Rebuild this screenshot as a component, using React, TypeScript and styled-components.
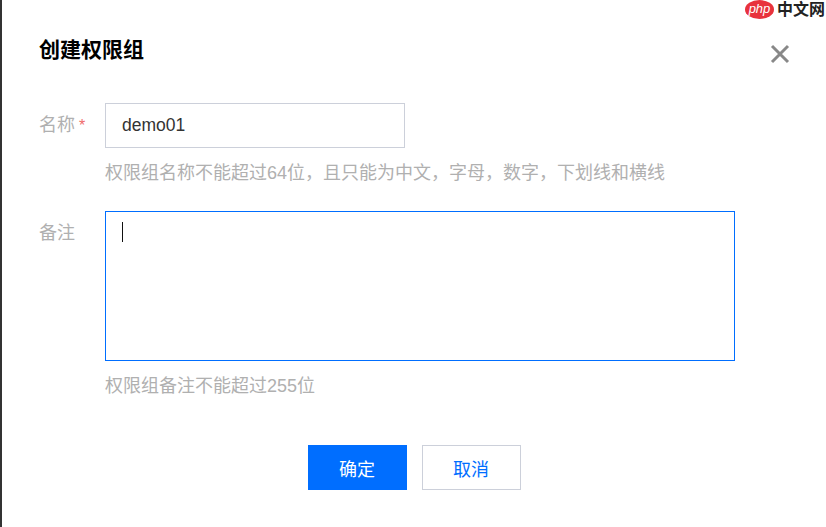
import styled, { createGlobalStyle } from 'styled-components';

const GlobalStyle = createGlobalStyle`
    html, body {
        margin: 0;
        padding: 0;
        background: #fff;
    }
    body {
        font-family: "Liberation Sans", "Noto Sans CJK SC", sans-serif;
    }
`

const App = () => {
    return (
        <Dialog>
            <GlobalStyle />
            <Watermark>
                <PhpBadge>php</PhpBadge>
                <WatermarkText>中文网</WatermarkText>
            </Watermark>
            <Header>
                <Title>创建权限组</Title>
                <CloseButton aria-label="关闭">
                    <svg width="20" height="20" viewBox="0 0 20 20">
                        <path d="M2 2 L18 18 M18 2 L2 18" stroke="#888" strokeWidth="3" fill="none" />
                    </svg>
                </CloseButton>
            </Header>
            <Row>
                <Label>名称<Required>*</Required></Label>
                <Field>
                    <NameInput defaultValue="demo01" />
                    <Help>权限组名称不能超过64位，且只能为中文，字母，数字，下划线和横线</Help>
                </Field>
            </Row>
            <Row $top={24}>
                <Label>备注</Label>
                <Field>
                    <RemarkBox>
                        <Caret />
                    </RemarkBox>
                    <Help>权限组备注不能超过255位</Help>
                </Field>
            </Row>
            <Actions>
                <Button $primary>确定</Button>
                <Button>取消</Button>
            </Actions>
        </Dialog>
    );
};

const Dialog = styled.div`
    position: relative;
    box-sizing: border-box;
    width: 826px;
    height: 527px;
    overflow: hidden;
    border-left: 2px solid #333;
    padding: 37px 36px 0 37px;
    background: #fff;
`
const Watermark = styled.div`
    position: absolute;
    top: 0;
    right: 1px;
    display: flex;
    align-items: center;
    gap: 3px;
    height: 19px;
`
const PhpBadge = styled.span`
    display: block;
    width: 29px;
    height: 19px;
    border-radius: 50%;
    background: #e8323c;
    color: #fff;
    font-size: 13px;
    font-style: italic;
    line-height: 17px;
    text-align: center;
`
const WatermarkText = styled.span`
    color: #222;
    font-size: 16px;
    font-weight: bold;
    line-height: 19px;
`
const Header = styled.div`
    display: flex;
    align-items: flex-start;
    justify-content: space-between;
    height: 66px;
`
const Title = styled.h2`
    margin: 0;
    color: #000;
    font-size: 21px;
    font-weight: bold;
    line-height: 25px;
`
const CloseButton = styled.button`
    display: block;
    width: 20px;
    height: 20px;
    margin: 7px 0 0;
    padding: 0;
    border: none;
    background: none;
`
const Row = styled.div<{ $top?: number }>`
    display: flex;
    margin-top: ${props => props.$top ?? 0}px;
`
const Label = styled.div`
    flex: none;
    width: 66px;
    height: 45px;
    color: #b0b0b0;
    font-size: 18px;
    line-height: 44px;
`
const Required = styled.span`
    margin-left: 4px;
    color: #f06a6a;
    font-size: 16px;
`
const Field = styled.div`
    display: flex;
    flex-direction: column;
`
const NameInput = styled.input`
    box-sizing: border-box;
    width: 300px;
    height: 45px;
    padding: 0 16px;
    border: 1px solid #ccd0da;
    border-radius: 0;
    outline: none;
    color: #333;
    font-family: "Liberation Sans", "Noto Sans CJK SC", sans-serif;
    font-size: 17.5px;
`
const RemarkBox = styled.div`
    box-sizing: border-box;
    width: 630px;
    height: 150px;
    padding: 10px 16px;
    border: 1px solid #006eff;
`
const Caret = styled.span`
    display: block;
    width: 1px;
    height: 20px;
    background: #111;
`
const Help = styled.div`
    margin-top: 12px;
    color: #b0b0b0;
    font-size: 18px;
    line-height: 27px;
    white-space: nowrap;
`
const Actions = styled.div`
    display: flex;
    justify-content: center;
    gap: 15px;
    margin-top: 45px;
    width: 750px;
`
const Button = styled.button<{ $primary?: boolean }>`
    box-sizing: border-box;
    width: 99px;
    height: 45px;
    padding: 0;
    border: 1px solid ${props => (props.$primary ? '#006eff' : '#ccd0da')};
    background: ${props => (props.$primary ? '#006eff' : '#fff')};
    color: ${props => (props.$primary ? '#fff' : '#006eff')};
    font-family: "Liberation Sans", "Noto Sans CJK SC", sans-serif;
    font-size: 18px;
`

export default App;
